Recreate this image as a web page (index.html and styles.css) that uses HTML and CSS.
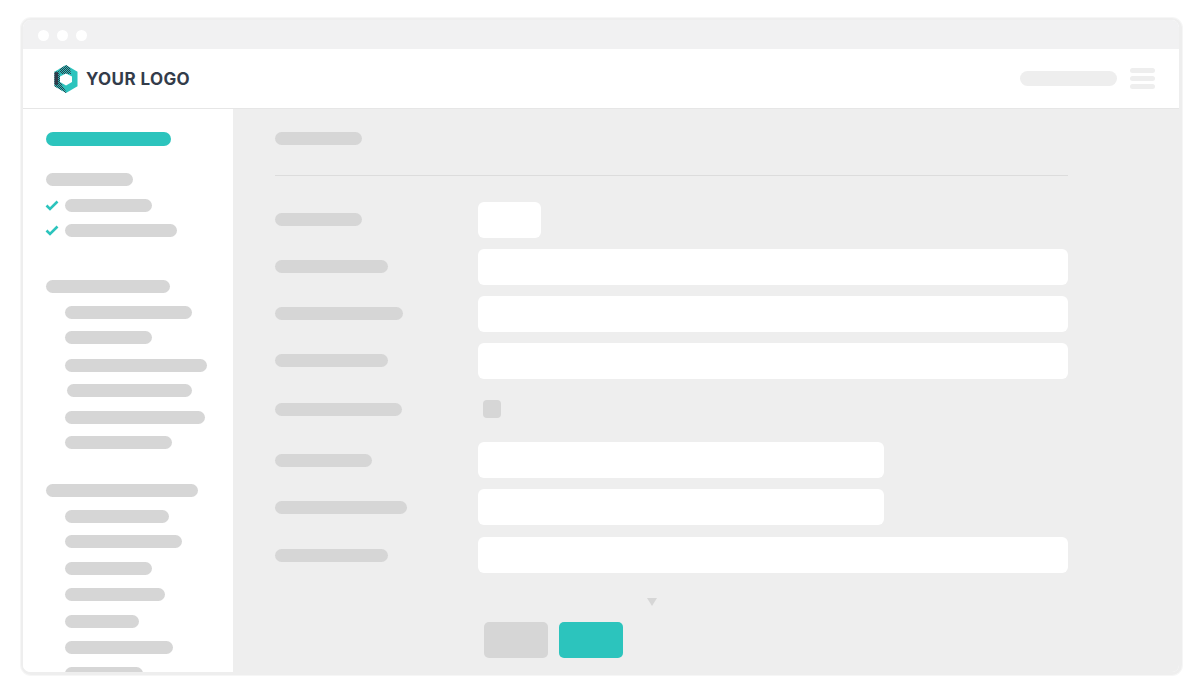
FILE: index.html
```html
<!DOCTYPE html>
<html lang="en">
<head>
<meta charset="utf-8">
<title>Your Logo</title>
<link rel="stylesheet" href="styles.css">
</head>
<body>
<div class="window">
  <div class="titlebar"><i class="dot"></i><i class="dot"></i><i class="dot"></i></div>
  <header class="header">
    <div class="logo">
      <svg class="logo-mark" viewBox="0 0 24 28" aria-hidden="true">
        <defs>
          <pattern id="dither" width="2" height="2" patternUnits="userSpaceOnUse">
            <rect width="1" height="1" fill="#2f3a4a"/>
            <rect x="1" y="1" width="1" height="1" fill="#2f3a4a"/>
          </pattern>
        </defs>
        <path fill="#2cc4bd" d="M12 0 23.500 6.800v14.400L12 28 .5 21.200V6.800z"/>
        <path fill="url(#dither)" d="M12 0 16 2.400 17 9H7L5 4.200zM.5 6.800 5 6 8 20l5 8h-1L.5 21.200z"/>
        <path fill="#2f3a4a" d="M.5 7.500 4 7v13l-3.500-.5z"/>
        <path fill="#fff" d="M12 8.500 18 11.500v5.500L12 20.500 6 17v-5.500z"/>
      </svg>
      <span class="logo-text">YOUR LOGO</span>
    </div>
    <div class="header-right">
      <span class="search"></span>
      <span class="burger"><i></i><i></i><i></i></span>
    </div>
  </header>
  <div class="body">
    <aside class="sidebar">
      <div class="bar teal w125"></div>
      <div class="group first">
        <div class="bar w87"></div>
        <div class="item g13"><svg class="tick" viewBox="0 0 14 11" aria-hidden="true"><path d="M1.500 5.500 5 9l7.500-7.500"/></svg><div class="bar w87"></div></div>
        <div class="item"><svg class="tick" viewBox="0 0 14 11" aria-hidden="true"><path d="M1.500 5.500 5 9l7.500-7.500"/></svg><div class="bar w112"></div></div>
      </div>
      <div class="group second">
        <div class="bar w124"></div>
        <div class="item g13"><div class="bar w127"></div></div>
        <div class="item"><div class="bar w87"></div></div>
        <div class="item g15"><div class="bar w142"></div></div>
        <div class="item nudge"><div class="bar w125"></div></div>
        <div class="item g14"><div class="bar w140"></div></div>
        <div class="item"><div class="bar w107"></div></div>
      </div>
      <div class="group third">
        <div class="bar w152"></div>
        <div class="item g13"><div class="bar w104"></div></div>
        <div class="item"><div class="bar w117"></div></div>
        <div class="item g14"><div class="bar w87"></div></div>
        <div class="item g13"><div class="bar w100"></div></div>
        <div class="item g14"><div class="bar w74"></div></div>
        <div class="item g13"><div class="bar w108"></div></div>
        <div class="item g13"><div class="bar w78"></div></div>
      </div>
    </aside>
    <main class="main">
      <div class="bar w87 title"></div>
      <hr class="rule">
      <div class="form">
        <div class="row"><div class="bar w87 lift"></div><div class="input small"></div></div>
        <div class="row"><div class="bar w113 lift"></div><div class="input"></div></div>
        <div class="row"><div class="bar w128 lift"></div><div class="input"></div></div>
        <div class="row"><div class="bar w113 lift"></div><div class="input"></div></div>
        <div class="row check-row"><div class="bar w127"></div><div class="checkbox"></div></div>
        <div class="row"><div class="bar w97"></div><div class="input medium"></div></div>
        <div class="row"><div class="bar w132"></div><div class="input medium"></div></div>
        <div class="row last"><div class="bar w113"></div><div class="input"></div></div>
      </div>
      <div class="caret"></div>
      <div class="actions"><div class="btn grey"></div><div class="btn primary"></div></div>
    </main>
  </div>
</div>
</body>
</html>
```

FILE: styles.css
```css
* { box-sizing: border-box; }
html, body { margin: 0; height: 100%; background: #fff; overflow: hidden; }
body { padding: 18px 18px 0 21px; }
.window {
  width: 1161px;
  height: 657px;
  border: 2px solid #eeeeee;
  border-width: 2px 3px 3px 2px;
  border-radius: 10px;
  box-shadow: 0 0 0 1px #f6f6f6;
  overflow: hidden;
  display: flex;
  flex-direction: column;
  background: #fff;
}
.titlebar {
  height: 29px;
  flex: none;
  background: #f1f1f2;
  display: flex;
  align-items: center;
  gap: 8px;
  padding: 1px 0 0 15px;
}
.dot { width: 11px; height: 11px; border-radius: 50%; background: #fff; }
.header {
  height: 60px;
  flex: none;
  background: #fff;
  border-bottom: 1px solid #e6e6e6;
  display: flex;
  align-items: center;
  justify-content: space-between;
  padding: 0 24px 0 31px;
}
.logo { display: flex; align-items: center; gap: 8px; }
.logo-mark { width: 24px; height: 28px; display: block; }
.logo-text {
  font-family: Inter, "Liberation Sans", sans-serif;
  font-weight: 700;
  font-size: 17px;
  letter-spacing: 0.4px;
  line-height: 20px;
  color: #333c4a;
  white-space: nowrap;
}
.header-right { display: flex; align-items: center; gap: 13px; }
.search { width: 97px; height: 15px; border-radius: 8px; background: #eee; }
.burger { width: 25px; display: flex; flex-direction: column; gap: 3px; }
.burger i { height: 5px; border-radius: 3px; background: #eee; }
.body { flex: 1; min-height: 0; display: flex; }
.sidebar { width: 210px; flex: none; background: #fff; padding: 23px 0 0 23px; overflow: hidden; }
.bar { height: 13px; border-radius: 7px; background: #d6d6d6; flex: none; }
.bar.teal { background: #2cc4bd; height: 14px; }
.group { display: flex; flex-direction: column; }
.group.first { margin-top: 27px; }
.group.second { margin-top: 43px; }
.group.third { margin-top: 35px; }
.item { display: flex; align-items: center; margin: 12px 0 0 19px; position: relative; }
.item.g13 { margin-top: 13px; }
.item.g14 { margin-top: 14px; }
.item.g15 { margin-top: 15px; }
.item.nudge { margin-left: 21px; }
.tick {
  position: absolute;
  left: -20px;
  top: 1px;
  width: 14px;
  height: 11px;
  fill: none;
  stroke: #2cc4bd;
  stroke-width: 2.600;
}
.main { flex: 1; background: #eee; padding: 23px 0 0 42px; overflow: hidden; }
.rule { width: 793px; height: 1px; margin: 30px 0 0; border: 0; background: #dcdcdc; }
.form { width: 793px; margin-top: 26px; display: flex; flex-direction: column; }
.row { display: flex; align-items: center; justify-content: space-between; margin-bottom: 11px; }
.check-row { height: 18px; margin: 10px 0 24px; justify-content: flex-start; }
.last { margin: 1px 0 0; }
.row .bar { margin-right: auto; }
.row .bar.lift { margin-bottom: 2px; }
.input { width: 590px; height: 36px; border-radius: 6px; background: #fff; }
.input.small { width: 63px; margin-right: 527px; }
.input.medium { width: 406px; margin-right: 184px; }
.checkbox { width: 18px; height: 18px; border-radius: 4px; background: #d6d6d6; margin-right: 567px; }
.caret {
  width: 0;
  height: 0;
  margin: 25px 0 0 372px;
  border-left: 5px solid transparent;
  border-right: 5px solid transparent;
  border-top: 8px solid #d6d6d6;
}
.actions { display: flex; gap: 11px; margin: 16px 0 0 209px; }
.btn { width: 64px; height: 36px; border-radius: 5px; }
.btn.grey { background: #d6d6d6; }
.btn.primary { background: #2cc4bd; }
.w74 { width: 74px; } .w78 { width: 78px; } .w87 { width: 87px; } .w97 { width: 97px; }
.w100 { width: 100px; } .w104 { width: 104px; } .w107 { width: 107px; } .w108 { width: 108px; }
.w112 { width: 112px; } .w113 { width: 113px; } .w117 { width: 117px; } .w124 { width: 124px; }
.w125 { width: 125px; } .w127 { width: 127px; } .w128 { width: 128px; } .w132 { width: 132px; }
.w140 { width: 140px; } .w142 { width: 142px; } .w152 { width: 152px; }
```
